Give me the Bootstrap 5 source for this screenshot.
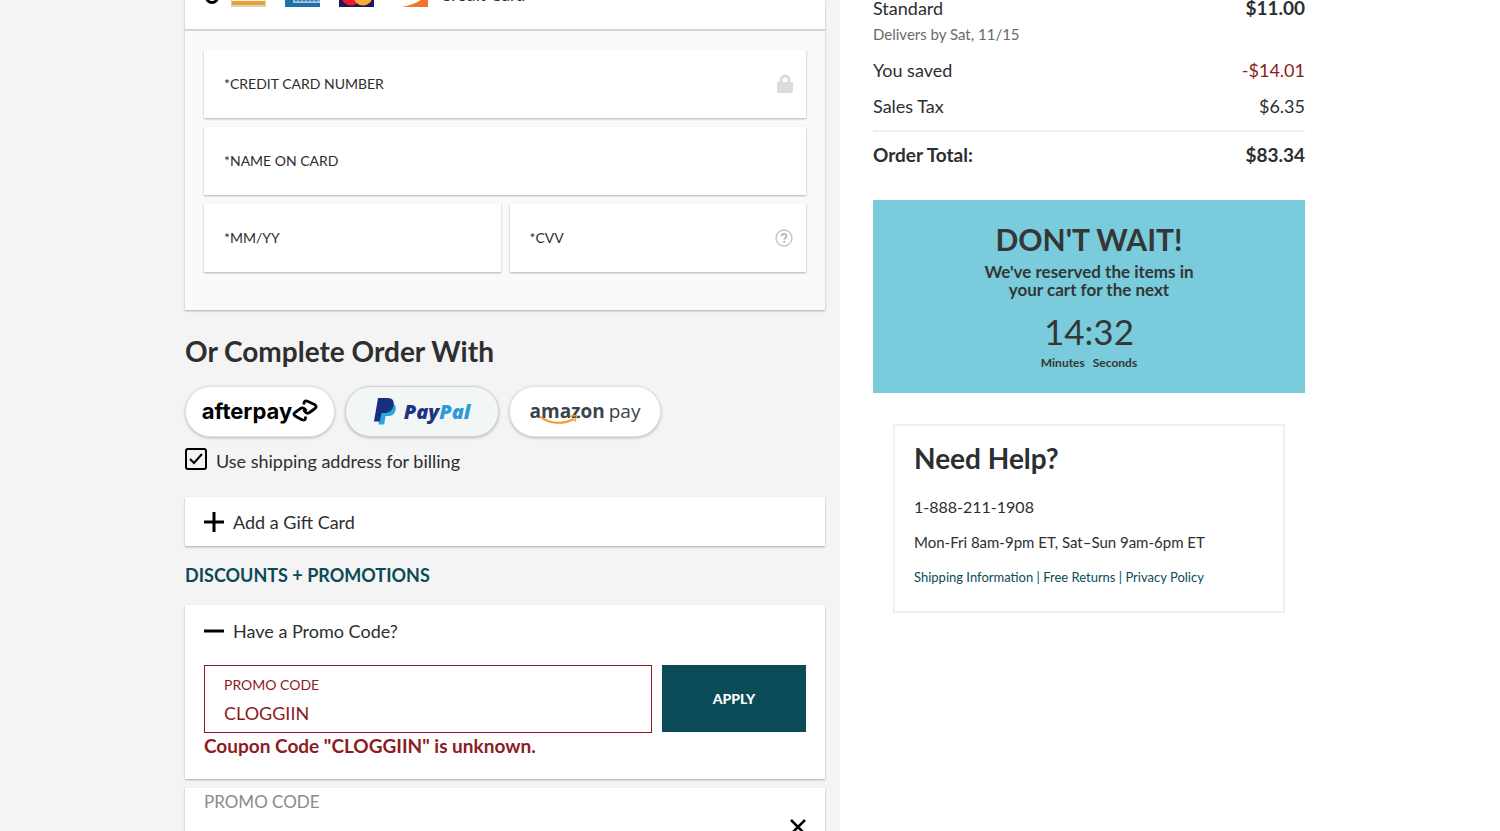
<!DOCTYPE html>
<html lang="en">
<head>
<meta charset="utf-8">
<meta name="viewport" content="width=device-width, initial-scale=1">
<title>Checkout</title>
<link href="https://cdn.jsdelivr.net/npm/bootstrap@5.3.0/dist/css/bootstrap.min.css" rel="stylesheet">
<style>
:root { --ink: #2d2e30; --teal: #0a4b57; --error: #8b1c22; }
body { font-family: Lato, "Liberation Sans", sans-serif; font-size: 18px; line-height: 24px; color: var(--ink); background: #fff; }
.pay-col { background: #f4f4f4; flex: 0 0 56%; padding-right: 15px; }
.pay-inner { width: 100%; max-width: 640px; }
.sum-col { padding-left: 33px; }
.sum-inner { width: 100%; max-width: 432px; }
.panel { background: #fff; box-shadow: 0 1px 2px rgba(0,0,0,.3); }
.panel-head { height: 31px; padding: 0 19px 22px 20px; border-bottom: 2px solid #d4d4d4; }
.panel-body { background: #fafafa; padding: 19px 19px 38px; }
.field { background: #fff; height: 68px; padding: 0 13px 0 20px; box-shadow: 0 1px 2px rgba(0,0,0,.3); font-size: 14px; }
.field input, .promo-field input, .next-promo input { border: 0; outline: 0; background: transparent; min-width: 0; padding: 0; color: inherit; }
.gap-fields { gap: 9px; }
.radio-dot { appearance: none; width: 14px; height: 14px; border: 3px solid #000; border-radius: 50%; margin: 0 12px 3px 0; }
.brand-icons { gap: 19px; }
.card-name { font-size: 17px; margin-left: 12px; }
.title-lg { font-size: 28px; line-height: 32px; font-weight: 700; margin: 0; }
.pay-title { padding-top: 25px; }
.pills { margin-top: 19px; gap: 10px; }
.pill { height: 51px; border: 1px solid #e3e3e3; border-radius: 26px; background: #fff; box-shadow: 0 1px 3px rgba(0,0,0,.25); padding: 0; }
.pill-after { width: 150px; color: #000; font: 700 22px/24px Inter, sans-serif; padding-bottom: 2px; }
.pill-paypal { width: 154px; background: #f3f6f6; border-color: #d3d6d6; font: italic 800 20px/24px "Open Sans", sans-serif; color: #1f3480; }
.pill-paypal .pal { color: #2a9bd8; }
.pill-amazon { width: 152px; color: #3a444d; font: 700 19px/24px "Open Sans", sans-serif; padding-bottom: 2px; }
.smile { position: absolute; left: 29px; bottom: 11px; }
.ship-check { margin-top: 11px; gap: 9px; }
.ship-check label { padding-top: 1px; }
.tick { appearance: none; flex: none; width: 22px; height: 22px; margin: 0; border: 2px solid #000; border-radius: 3px; background: #f4f4f4; }
.tick:checked { background: #f4f4f4 url("data:image/svg+xml,%3Csvg xmlns='http://www.w3.org/2000/svg' viewBox='0 0 18 18'%3E%3Cpath d='M3 9l4 4 8-9' fill='none' stroke='%23000' stroke-width='2'/%3E%3C/svg%3E") center/18px no-repeat; }
.toggle { background: none; border: 0; padding: 0; color: inherit; gap: 9px; }
.gift { margin-top: 24px; height: 49px; padding: 1px 19px 0; }
.section-title { color: var(--teal); font-size: 18px; line-height: 24px; font-weight: 700; margin: 17px 0 0; }
.promo { margin-top: 18px; padding: 14px 19px 21px; }
.promo-form { margin-top: 22px; gap: 10px; }
.promo-field { border: 1px solid var(--error); color: var(--error); height: 68px; padding: 9px 19px; }
.promo-field label { font-size: 14px; line-height: 20px; }
.promo-field input { line-height: 24px; margin-top: 6px; }
.btn-apply { width: 144px; height: 67px; border-radius: 0; border: 0; background: var(--teal); color: #fff; font-weight: 900; font-size: 14px; }
.btn-apply:hover { background: #083c46; color: #fff; }
.error-text { color: var(--error); font-size: 19px; font-weight: 700; padding-top: 1px; }
.next-promo { margin-top: 9px; padding: 0 19px 19px; }
.next-promo label { color: #8a8a8a; font-size: 17px; line-height: 28px; }
.close-x { margin-top: 25px; }
.ship-name { line-height: 16px; }
.strong-sum { font-size: 19px; font-weight: 700; }
.ship-note { font-size: 15px; line-height: 20px; color: #6a6a6a; margin-top: 8px; }
.saved { margin-top: 14px; }
.tax { margin-top: 12px; }
.minus { color: var(--error); }
.total { border-top: 2px solid #eee; margin-top: 12px; padding-top: 11px; }
.banner { background: #7acbdc; color: #333735; margin-top: 33px; padding: 23px 0 20px; }
.banner h2 { font-size: 30px; line-height: 32px; font-weight: 700; margin: 0; }
.banner p { font-size: 17px; line-height: 18px; font-weight: 700; margin: 8px 0 0; }
.clock { font-size: 35px; line-height: 40px; margin-top: 12px; }
.clock-units { font-size: 12px; line-height: 20px; font-weight: 700; gap: 8px; margin-top: 2px; }
.help { border: 2px solid #f0f0f0; margin: 31px 20px 0; padding: 16px 19px 22px; }
.help p { font-size: 16px; margin: 11px 0 0; }
.help .phone { margin-top: 21px; }
.help .hours { font-size: 15px; }
.help a { color: var(--teal); text-decoration: none; }
.help .help-links { font-size: 13px; color: var(--teal); }
</style>
</head>
<body>
<div class="d-flex vh-100 overflow-hidden">
  <main class="pay-col d-flex justify-content-end align-items-start">
    <div class="pay-inner">
      <section class="panel">
        <div class="panel-head d-flex align-items-end">
          <input class="radio-dot" type="radio" name="pay" id="pay-card">
          <label for="pay-card" class="d-flex align-items-end">
            <span class="brand-icons d-flex">
              <svg width="35" height="24" viewBox="0 0 35 24"><rect width="35" height="24" fill="#d8d2c4"/><rect x="1" y="1" width="33" height="21" fill="#fdf6e2"/><rect x="1" y="18" width="33" height="4" fill="#f0a030"/></svg>
              <svg width="35" height="24" viewBox="0 0 35 24"><rect width="35" height="24" fill="#1f6fa8"/><path d="M8 14h27v6H8z" fill="#a9cbe2"/><path d="M9 17h26M11 15v4M15 15v4M19 15v4M23 15v4M27 15v4M31 15v4" stroke="#1f6fa8"/></svg>
              <svg width="35" height="24" viewBox="0 0 35 24"><rect width="35" height="24" fill="#1b1a5c"/><circle cx="12" cy="13" r="9.500" fill="#ec1c24"/><circle cx="24" cy="13" r="9.500" fill="#fbab34"/></svg>
              <svg width="35" height="24" viewBox="0 0 35 24"><rect width="35" height="24" fill="#fff"/><path d="M9 24C20 22 29 18 35 10v14z" fill="#f4742b"/></svg>
            </span>
            <span class="card-name">Credit Card</span>
          </label>
        </div>
        <div class="panel-body d-grid gap-fields">
          <div class="field d-flex align-items-center">
            <label for="cc">*CREDIT CARD NUMBER</label><input id="cc" type="text" class="flex-grow-1">
            <svg width="16" height="20" viewBox="0 0 16 20"><path d="M4 9V6a4 4 0 018 0v3" fill="none" stroke="#dcdcdc" stroke-width="3"/><rect y="8" width="16" height="11" rx="1" fill="#dcdcdc"/></svg>
          </div>
          <div class="field d-flex align-items-center">
            <label for="nm">*NAME ON CARD</label><input id="nm" type="text" class="flex-grow-1">
          </div>
          <div class="d-flex gap-fields">
            <div class="field d-flex align-items-center w-50">
              <label for="exp">*MM/YY</label><input id="exp" type="text" class="flex-grow-1">
            </div>
            <div class="field d-flex align-items-center w-50">
              <label for="cvv">*CVV</label><input id="cvv" type="text" class="flex-grow-1">
              <svg width="18" height="18" viewBox="0 0 18 18" fill="none"><circle cx="9" cy="9" r="8" stroke="#c0c0c0" stroke-width="1.300"/><path d="M6.500 7.300c0-3.300 5-3.200 5-.3 0 1.700-2.300 1.800-2.300 3.600" stroke="#b4b4b4" stroke-width="1.700"/><circle cx="9.200" cy="12.800" r="1.100" fill="#b4b4b4"/></svg>
            </div>
          </div>
        </div>
      </section>

      <h2 class="title-lg pay-title">Or Complete Order With</h2>
      <div class="d-flex pills">
        <button type="button" class="pill pill-after d-flex align-items-center justify-content-center">afterpay<svg width="26" height="23" viewBox="0 0 26 23" fill="none" stroke="#000" stroke-width="2.800" stroke-linejoin="round"><path d="M12 5.500V4Q12.500 .8 15.500 2.300L22.500 5.500Q25.500 7.500 23 9.500L17.500 13.500Q14.500 15.300 13 12.500L11.500 10.800"/><path d="M14.500 12L12.500 9.800Q10.500 8 8 9.800L3 13.500Q.5 15.500 3.500 17.200L10 20.700Q13.500 22 13.500 18.500V17.500"/></svg></button>
        <button type="button" class="pill pill-paypal d-flex align-items-center justify-content-center gap-2"><svg width="22" height="27" viewBox="0 0 22 27"><path d="M8 6h12q2.500 2 1.500 6.500-1.500 5.500-7.500 5.500h-2.500l-1.300 8.500H4.500z" fill="#2ba5df"/><path d="M4 0h9.500c5 0 7 3 6 7.500-1 5.500-4.500 7.500-9 7.500H7.500L5.800 23.500H0z" fill="#15307f"/></svg><span>Pay<span class="pal">Pal</span></span></button>
        <button type="button" class="pill pill-amazon d-flex align-items-center justify-content-center position-relative"><span>amazon</span><span class="fw-normal ms-1">pay</span><svg class="smile" width="40" height="10" viewBox="0 0 40 10" fill="none" stroke="#f49a2c"><path d="M1 1.500C11 9.500 24 9.500 35 4" stroke-width="2"/><path d="M31 1.500q6-1.500 6.500-.5t-2 5.500" stroke-width="1.500"/></svg></button>
      </div>
      <div class="ship-check d-flex">
        <input class="tick" type="checkbox" id="same" checked><label for="same">Use shipping address for billing</label>
      </div>

      <section class="panel gift d-flex align-items-center">
        <button type="button" class="toggle d-flex align-items-center"><svg width="20" height="20" viewBox="0 0 20 20"><path d="M0 10h20M10 0v20" stroke="#000" stroke-width="3"/></svg>Add a Gift Card</button>
      </section>
      <h3 class="section-title">DISCOUNTS + PROMOTIONS</h3>
      <section class="panel promo">
        <button type="button" class="toggle d-flex align-items-center"><svg width="20" height="20" viewBox="0 0 20 20"><path d="M0 10h20" stroke="#000" stroke-width="3"/></svg>Have a Promo Code?</button>
        <form class="d-flex align-items-start promo-form">
          <div class="promo-field d-flex flex-column flex-grow-1"><label for="promo">PROMO CODE</label><input id="promo" type="text" value="CLOGGIIN"></div>
          <button type="button" class="btn btn-apply">APPLY</button>
        </form>
        <div class="error-text">Coupon Code "CLOGGIIN" is unknown.</div>
      </section>
      <section class="panel next-promo d-flex">
        <div class="flex-grow-1"><label for="promo2">PROMO CODE</label><input id="promo2" type="text" class="d-block w-100"></div>
        <button type="button" class="toggle align-self-start close-x" aria-label="Remove"><svg width="16" height="16" viewBox="0 0 16 16"><path d="M1 1l14 14M15 1L1 15" stroke="#000" stroke-width="2.500"/></svg></button>
      </section>
    </div>
  </main>

  <aside class="sum-col flex-grow-1">
    <div class="sum-inner">
      <div class="ship-name d-flex justify-content-between"><span>Standard</span><span class="strong-sum">$11.00</span></div>
      <div class="ship-note">Delivers by Sat, 11/15</div>
      <div class="saved d-flex justify-content-between"><span>You saved</span><span class="minus">-$14.01</span></div>
      <div class="tax d-flex justify-content-between"><span>Sales Tax</span><span>$6.35</span></div>
      <div class="total strong-sum d-flex justify-content-between"><span>Order Total:</span><span>$83.34</span></div>
      <section class="banner text-center">
        <h2>DON'T WAIT!</h2>
        <p>We've reserved the items in<br>your cart for the next</p>
        <div class="clock">14:32</div>
        <div class="clock-units d-flex justify-content-center"><span>Minutes</span><span>Seconds</span></div>
      </section>
      <section class="help">
        <h2 class="title-lg">Need Help?</h2>
        <p class="phone">1-888-211-1908</p>
        <p class="hours">Mon-Fri 8am-9pm ET, Sat–Sun 9am-6pm ET</p>
        <p class="help-links"><a href="#">Shipping Information</a> | <a href="#">Free Returns</a> | <a href="#">Privacy Policy</a></p>
      </section>
    </div>
  </aside>
</div>
<script src="https://cdn.jsdelivr.net/npm/bootstrap@5.3.0/dist/js/bootstrap.bundle.min.js"></script>
</body>
</html>
